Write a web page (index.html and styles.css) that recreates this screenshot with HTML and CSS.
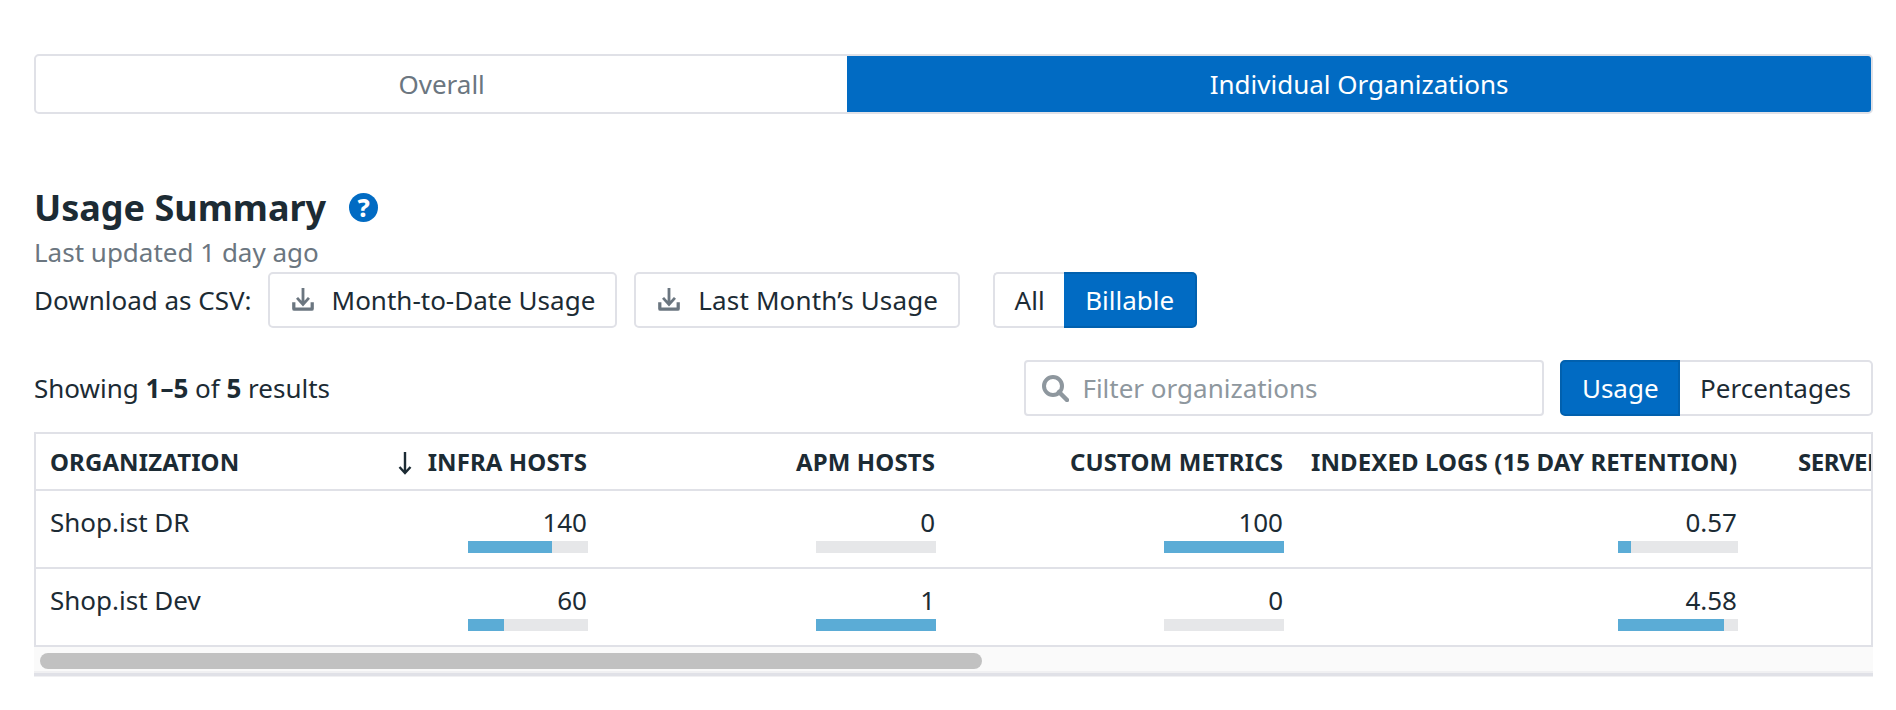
FILE: index.html
```html
<!DOCTYPE html>
<html lang="en">
<head>
    <meta charset="UTF-8">
    <title>Usage Summary</title>
    <link rel="stylesheet" href="styles.css">
</head>
<body>
    <div class="tabs">
        <div class="tab">Overall</div>
        <div class="tab active">Individual Organizations</div>
    </div>

    <section class="summary">
        <div class="title-row">
            <h2>Usage Summary</h2>
            <span class="help">?</span>
        </div>
        <p class="updated">Last updated 1 day ago</p>
        <div class="download-row">
            <span class="download-label">Download as CSV:</span>
            <button class="btn">
                <svg class="icon-download" viewBox="0 0 24 24"><path d="M12 1v14M6.500 10l5.500 6 5.500-6" fill="none" stroke="#6b7680" stroke-width="2.600"/><path d="M2 14v6a2 2 0 0 0 2 2h16a2 2 0 0 0 2-2v-6h-3v5H5v-5z" fill="#6b7680"/></svg>
                Month-to-Date Usage
            </button>
            <button class="btn btn-last">
                <svg class="icon-download" viewBox="0 0 24 24"><path d="M12 1v14M6.500 10l5.500 6 5.500-6" fill="none" stroke="#6b7680" stroke-width="2.600"/><path d="M2 14v6a2 2 0 0 0 2 2h16a2 2 0 0 0 2-2v-6h-3v5H5v-5z" fill="#6b7680"/></svg>
                Last Month’s Usage
            </button>
            <div class="toggle toggle-billable">
                <button class="toggle-btn">All</button>
                <button class="toggle-btn on">Billable</button>
            </div>
        </div>
    </section>

    <div class="filter-row">
        <div class="showing">Showing <b>1–5</b> of <b>5</b> results</div>
        <div class="search">
            <svg class="icon-search" viewBox="0 0 28 28"><circle cx="12" cy="12" r="9" fill="none" stroke="#8e979e" stroke-width="4"/><path d="M18 18l8 8" stroke="#8e979e" stroke-width="4.500" stroke-linecap="round"/></svg>
            <span>Filter organizations</span>
        </div>
        <div class="toggle">
            <button class="toggle-btn on">Usage</button>
            <button class="toggle-btn">Percentages</button>
        </div>
    </div>

    <div class="table-wrap">
        <table>
            <colgroup>
                <col class="col-org">
                <col class="col-infra">
                <col class="col-apm">
                <col class="col-custom">
                <col class="col-logs">
                <col class="col-server">
            </colgroup>
            <thead>
                <tr>
                    <th class="left">ORGANIZATION</th>
                    <th><svg class="icon-sort" viewBox="0 0 14 24"><path d="M7 1v21M1.500 16L7 22l5.500-6" fill="none" stroke="#1c2b34" stroke-width="2.400"/></svg>INFRA HOSTS</th>
                    <th>APM HOSTS</th>
                    <th>CUSTOM METRICS</th>
                    <th>INDEXED LOGS (15 DAY RETENTION)</th>
                    <th class="left server">SERVERLESS FUNCTIONS</th>
                </tr>
            </thead>
            <tbody>
                <tr>
                    <td class="left">Shop.ist DR</td>
                    <td>140<div class="bar"><div class="fill" style="width: 70%"></div></div></td>
                    <td>0<div class="bar"><div class="fill" style="width: 0%"></div></div></td>
                    <td>100<div class="bar"><div class="fill" style="width: 100%"></div></div></td>
                    <td>0.57<div class="bar"><div class="fill" style="width: 11%"></div></div></td>
                    <td></td>
                </tr>
                <tr>
                    <td class="left">Shop.ist Dev</td>
                    <td>60<div class="bar"><div class="fill" style="width: 30%"></div></div></td>
                    <td>1<div class="bar"><div class="fill" style="width: 100%"></div></div></td>
                    <td>0<div class="bar"><div class="fill" style="width: 0%"></div></div></td>
                    <td>4.58<div class="bar"><div class="fill" style="width: 88%"></div></div></td>
                    <td></td>
                </tr>
            </tbody>
        </table>
    </div>
    <div class="scroll-track"><div class="scroll-thumb"></div></div>
</body>
</html>
```

FILE: styles.css
```css
* {
    box-sizing: border-box;
}
body {
    margin: 0;
    padding: 54px 23px 0 34px;
    background: #fff;
    color: #1c2b34;
    font-family: "Noto Sans", sans-serif;
    font-size: 26px;
    height: 710px;
    overflow: hidden;
}
button {
    font-family: inherit;
    font-size: inherit;
    color: inherit;
    background: #fff;
    cursor: pointer;
}

/* top tabs */
.tabs {
    display: flex;
    height: 60px;
    border: 2px solid #e0e1e7;
    border-radius: 5px;
    overflow: hidden;
}
.tab {
    flex: auto;
    display: flex;
    align-items: center;
    justify-content: center;
    color: #6b7680;
}
.tab.active {
    background: #016bc3;
    color: #fff;
}

/* summary header */
.summary {
    margin-top: 68px;
}
.title-row {
    display: flex;
    align-items: center;
    height: 50px;
}
h2 {
    margin: 0;
    font-size: 36px;
    font-weight: 700;
}
.help {
    width: 29px;
    height: 29px;
    margin-left: 23px;
    border-radius: 50%;
    background: #016bc3;
    color: #fff;
    font-size: 25px;
    font-weight: 800;
    line-height: 29px;
    text-align: center;
}
.updated {
    margin: 3px 0 0;
    height: 34px;
    line-height: 34px;
    color: #6b7680;
}
.download-row {
    display: flex;
    align-items: center;
    margin-top: 3px;
}
.download-label {
    margin-right: 16px;
}
.btn {
    display: flex;
    align-items: center;
    height: 56px;
    padding: 0 20px;
    margin-right: 17px;
    border: 2px solid #e0e1e7;
    border-radius: 5px;
}
.btn-last {
    letter-spacing: 0.15px;
}
.icon-download {
    width: 26px;
    height: 26px;
    margin-right: 16px;
}

/* segmented toggles */
.toggle {
    display: flex;
    height: 56px;
}
.toggle-billable {
    margin-left: 16px;
}
.toggle-btn {
    height: 100%;
    padding: 0 19.5px;
    border: 2px solid #e0e1e7;
    border-right: 0;
    border-radius: 5px 0 0 5px;
}
.toggle-btn.on {
    background: #016bc3;
    border: 2px solid #0160ae;
    color: #fff;
    border-radius: 5px 0 0 5px;
}
.toggle-btn + .toggle-btn {
    padding: 0 20px;
    border: 2px solid #e0e1e7;
    border-left: 0;
    border-radius: 0 5px 5px 0;
}
.toggle-btn + .toggle-btn.on {
    padding: 0 21px;
    border-color: #0160ae;
}

/* filter row */
.filter-row {
    display: flex;
    align-items: center;
    height: 56px;
    margin-top: 32px;
}
.showing {
    flex: 1;
}
.search {
    display: flex;
    align-items: center;
    width: 520px;
    height: 100%;
    margin-right: 16px;
    padding-left: 15px;
    border: 2px solid #e0e1e7;
    border-radius: 4px;
    color: #8e979e;
}
.icon-search {
    width: 28px;
    height: 28px;
    margin-right: 13px;
}

/* table */
.table-wrap {
    margin-top: 16px;
    border: 2px solid #e0e1e7;
    border-bottom: 0;
    overflow: hidden;
}
table {
    table-layout: fixed;
    width: 2000px;
    border-collapse: collapse;
}
.col-org { width: 300px; }
.col-infra { width: 265px; }
.col-apm { width: 348px; }
.col-custom { width: 348px; }
.col-logs { width: 454px; }
.col-server { width: 285px; }
th, td {
    padding: 0 14px;
    text-align: right;
    white-space: nowrap;
    border-bottom: 2px solid #e0e1e7;
}
th {
    height: 56px;
    font-size: 24px;
    font-weight: 700;
    letter-spacing: 0.1px;
}
td {
    height: 78px;
    vertical-align: top;
    padding-top: 13px;
    line-height: 36px;
}
.left {
    text-align: left;
}
th.server {
    padding-left: 47px;
    letter-spacing: -0.5px;
}
.icon-sort {
    width: 14px;
    height: 24px;
    margin-right: 16px;
    vertical-align: -4px;
}
.bar {
    width: 120px;
    height: 12px;
    margin: 1px -1px 0 auto;
    background: #e6e7e9;
}
.fill {
    height: 100%;
    background: #5bacd6;
}

/* scrollbar */
.scroll-track {
    height: 29px;
    padding: 6px 0 0 6px;
    background: #fafafa;
    border-bottom: 3px solid #e0e1e7;
    box-shadow: inset 0 -2px 0 #f0f0f2, 0 1px 0 #f0f0f2;
}
.scroll-thumb {
    width: 942px;
    height: 16px;
    border-radius: 8px;
    background: #c1c1c1;
}
```
